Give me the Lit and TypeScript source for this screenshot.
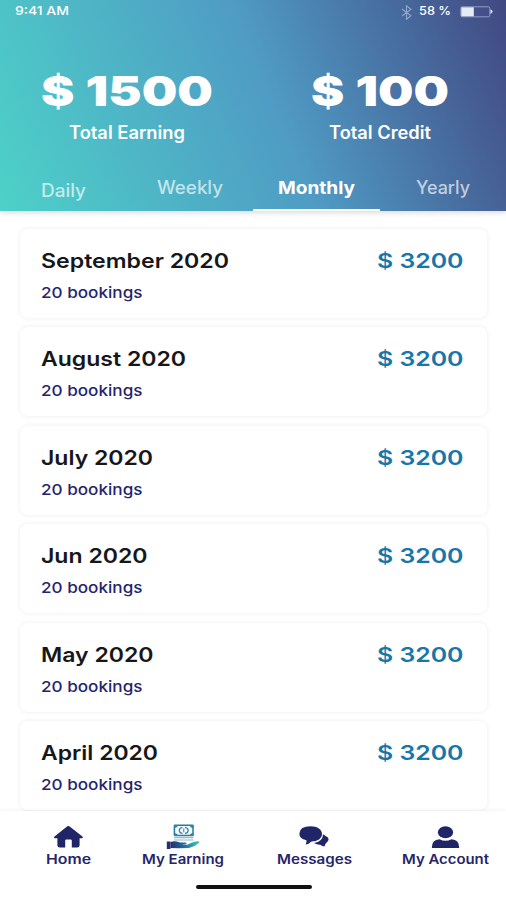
import { LitElement, html, css, svg } from "lit";
import { customElement, property } from "lit/decorators.js";

@customElement("wide-text")
export class WideText extends LitElement {
  @property() text = "";
  @property({ type: Number }) width = 100;
  @property({ type: Number }) size = 16;

  static styles = css`
    :host { display: block; line-height: 0; }
    svg { display: block; overflow: visible; }
    text { fill: currentColor; font-family: Inter, "Liberation Sans", sans-serif; font-weight: inherit; }
  `;

  render() {
    const h = Math.round(this.size * 0.73);
    return html`<svg width=${this.width} height=${h}>
      <text x="0" y=${h} font-size=${this.size} textLength=${this.width} lengthAdjust="spacingAndGlyphs">${this.text}</text>
    </svg>`;
  }
}

const months: [string, number][] = [
  ["September 2020", 188],
  ["August 2020", 145],
  ["July 2020", 112],
  ["Jun 2020", 106.5],
  ["May 2020", 112.5],
  ["April 2020", 117],
];

const tabs: [string, number][] = [
  ["Daily", 45],
  ["Weekly", 66],
  ["Monthly", 77],
  ["Yearly", 54],
];

const homeIcon = svg`<path d="M14 1.600Q15.300.2 16.700 1.600L29.400 11.500Q30.600 12.900 29 13.300H26.600V20Q26.600 22.500 24 22.500H18.800V15.600Q18.800 14.400 17.500 14.400H13.500Q12.200 14.400 12.200 15.600V22.500H7Q4.400 22.500 4.400 20V13.300H1.800Q.2 12.900 1.500 11.500Z" fill="#1f2566"/>`;

const earningIcon = svg`
  <defs><linearGradient id="teal" x1="0" y1="0" x2="1" y2="0">
    <stop offset="0" stop-color="#24306f"/><stop offset=".5" stop-color="#22709d"/><stop offset="1" stop-color="#48c9bd"/>
  </linearGradient></defs>
  <rect x="8.400" y="1.200" width="18.600" height="10.300" rx=".6" fill="#f4fbfd" stroke="#2877a0" stroke-width="1.500"/>
  <path d="M8 1h4q-.5 2.800-4 3zM27.500 1h-4q.5 2.800 4 3zM8 12h4q-.5-2.800-4-3zM27.500 12h-4q.5-2.800 4-3z" fill="#2a86a8"/>
  <path d="M16.500 3.400Q13.300 4 13.300 6.400t3.200 3M19 3.400Q22.200 4 22.200 6.400t-3.200 3" fill="none" stroke="#3c89b3" stroke-width="1.300"/>
  <path d="M17.700 4.600v3.600" stroke="#5b9fc4" stroke-width="1.300"/>
  <path d="M8 13.700h19.500M8 16h19.500" stroke="#8fbdd4" stroke-width="1.200"/>
  <path d="M.8 17.500H4.500V25H.8Z" fill="#26306e"/>
  <path d="M4.500 18q4-1.500 8 0 2 .8 6.500.5 2 .2 1.500 1.500l-5 .6 6 .2q6-3.600 11-3.500 1.600.4.400 1.600-5 4.400-9.900 5.100L12 24.300 4.500 23.900Z" fill="url(#teal)"/>`;

const messagesIcon = svg`
  <path d="M24 8.300L28.600 11.200Q30.300 12.900 28.900 15q-.8 1.300-1.800 2-1.300 1.500-1.600 3.600-2.300-.3-4.300-1.900-3.400.1-6.200-1.700Q23.800 15.600 24 8.300Z" fill="#1f2566"/>
  <path d="M11.600.3C18.500.3 23 3.600 23 8s-4.500 7.500-10.500 7.500Q9.600 18.400 6.700 18.500 7.800 16.500 7.500 14.300 0 12.600.4 7.500.8.300 11.600.3Z" fill="#1f2566"/>`;

const accountIcon = svg`
  <ellipse cx="14.500" cy="6.300" rx="7.600" ry="6" fill="#1f2566"/>
  <path d="M.8 21.900Q.8 13.600 8.500 13.200 14.500 16.200 20.500 13.200 28.200 13.600 28.200 21.900Z" fill="#1f2566"/>`;

@customElement("app-root")
export class AppRoot extends LitElement {
  static styles = css`
    * { box-sizing: border-box; }
    :host {
      display: flex; flex-direction: column; width: 506px; height: 900px;
      overflow: hidden; background: #fff; font-family: Inter, "Liberation Sans", sans-serif;
    }
    header {
      height: 211px; flex: none; display: flex; flex-direction: column; color: #fff;
      background: linear-gradient(68deg, #4dd1c8 0%, #4f9bc4 54%, #41447f 102%);
      box-shadow: 0 2px 5px rgba(0, 0, 0, 0.14); z-index: 1;
    }
    .status {
      height: 24px; padding: 6px 13px 0 15px; display: flex;
      justify-content: space-between; align-items: flex-start; font-weight: 500;
    }
    .right { display: flex; align-items: flex-start; }
    .bt { margin: -1px 7px 0 0; }
    .battery { margin: 0 0 0 9px; }
    .stats { display: grid; grid-template-columns: 1fr 1fr; padding: 52px 0 0 1px; height: 145px; }
    .stat { display: flex; flex-direction: column; align-items: center; gap: 20px; font-weight: 600; }
    .big { font-weight: 900; word-spacing: 1px; }
    .tabs { flex: 1; display: grid; grid-template-columns: repeat(4, 1fr); }
    .tab {
      display: flex; justify-content: center; padding: 12px 0 0 1px;
      color: rgba(255, 255, 255, 0.68); border-bottom: 2px solid transparent; font-weight: 500;
    }
    .tab.first { padding-top: 15px; }
    .tab.on { color: #fff; border-color: #fff; font-weight: 700; }
    main {
      flex: 1; min-height: 0; overflow: hidden; padding: 17.500px 19px 0 20px;
      display: flex; flex-direction: column; gap: 9.600px;
    }
    .card {
      flex: none; height: 89px; border-radius: 8px; background: #fff;
      box-shadow: 0 0 4px 1px rgba(0, 0, 0, 0.055);
      display: flex; justify-content: space-between; padding: 24px 24px 0 21px;
    }
    .info { display: flex; flex-direction: column; gap: 19px; color: #17171b; font-weight: 600; }
    .count { color: #25256e; font-weight: 500; }
    .amount { color: #1976a8; font-weight: 600; }
    footer {
      flex: none; height: 89px; background: #fff; z-index: 1;
      box-shadow: 0 -1px 3px rgba(0, 0, 0, 0.05);
      display: flex; flex-direction: column; align-items: center;
    }
    nav {
      width: 506px; height: 74px; padding: 12px 3px 0 11px; display: grid;
      grid-template-columns: 114px 116px 146px 116px;
    }
    .item {
      display: flex; flex-direction: column; align-items: center; height: 41px;
      justify-content: space-between; color: #25256b; font-weight: 600;
    }
    .icon { height: 27px; display: flex; align-items: center; }
    .icon svg, .right svg { display: block; }
    .bar { width: 116px; height: 4px; border-radius: 2px; background: #111; margin-left: 2px; }
  `;

  private stat(amount: string, aw: number, label: string, lw: number) {
    return html`<div class="stat">
      <wide-text class="big" text=${amount} width=${aw} size="41"></wide-text>
      <wide-text text=${label} width=${lw} size="18"></wide-text>
    </div>`;
  }

  private item(icon: unknown, w: number, h: number, label: string, lw: number) {
    return html`<div class="item">
      <div class="icon"><svg width=${w} height=${h} viewBox="0 0 ${w} ${h}">${icon}</svg></div>
      <wide-text text=${label} width=${lw} size="13"></wide-text>
    </div>`;
  }

  render() {
    return html`
      <header>
        <div class="status">
          <wide-text text="9:41 AM" width="54" size="12"></wide-text>
          <div class="right">
            <svg class="bt" width="11" height="15" viewBox="0 0 11 15" fill="none" stroke="#8ea9cb" stroke-width="1.100">
              <path d="M1 4l9 6.800-4.500 3.500V.8L10 4.200 1 11" />
            </svg>
            <wide-text text="58 %" width="32" size="12"></wide-text>
            <svg class="battery" width="33" height="12" viewBox="0 0 33 12">
              <rect x=".8" y=".8" width="29" height="10" rx="1.500" fill="none" stroke="#8f9fc4" />
              <rect x="1.300" y="1.300" width="12.500" height="9" fill="#e6ecf4" />
              <path d="M30.500 3.500q2.500 1 2 2.300t-2 2.300z" fill="#e6ebf3" />
            </svg>
          </div>
        </div>
        <div class="stats">
          ${this.stat("$ 1500", 172, "Total Earning", 116)}
          ${this.stat("$ 100", 138, "Total Credit", 102)}
        </div>
        <div class="tabs">
          ${tabs.map(
            ([t, w], i) => html`<div class="tab ${i === 2 ? "on" : ""} ${i === 0 ? "first" : ""}">
              <wide-text text=${t} width=${w} size="18"></wide-text>
            </div>`
          )}
        </div>
      </header>
      <main>
        ${months.map(
          ([m, w]) => html`<div class="card">
            <div class="info">
              <wide-text text=${m} width=${w} size="20"></wide-text>
              <wide-text class="count" text="20 bookings" width="101.5" size="15"></wide-text>
            </div>
            <wide-text class="amount" text="$ 3200" width="86.500" size="20.500"></wide-text>
          </div>`
        )}
      </main>
      <footer>
        <nav>
          ${this.item(homeIcon, 31, 23, "Home", 45)}
          ${this.item(earningIcon, 34, 26, "My Earning", 82)}
          ${this.item(messagesIcon, 30, 21, "Messages", 75)}
          ${this.item(accountIcon, 29, 22, "My Account", 87)}
        </nav>
        <div class="bar"></div>
      </footer>
    `;
  }
}
